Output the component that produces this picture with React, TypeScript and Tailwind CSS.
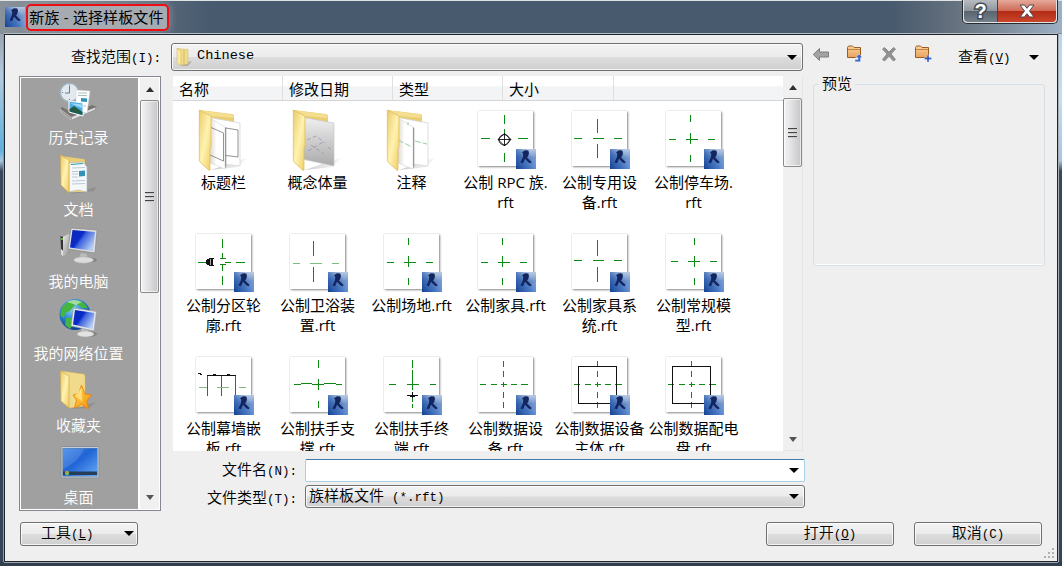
import React from "react";

const SONG = "font-['Liberation_Serif','Noto_Sans_CJK_SC',serif] text-[15px] font-[350] text-black";
const LATIN = "font-['Liberation_Mono',monospace] text-[12.5px] font-normal";
const YAHEI = "font-['Open_Sans','Noto_Sans_CJK_SC',sans-serif] text-[15px] text-black";
const G = "#0a8a12";

type Seg = [number, number, number];
type Thumb = { v: Seg[]; h: Seg[]; extra?: React.ReactNode; soft?: boolean };
type Item = { lines: string[]; thumb?: Thumb; folder?: "title" | "mass" | "note" };

const farH = (y: number): Seg[] => [[y, 2, 10], [y, 21, 32], [y, 42, 50]];
const cross = (x: number, y: number, dx = 0): Thumb => ({
  v: [[x, 4, 11], [x, 22, 33], [x, 44, 51]],
  h: [[y, 3 + dx, 10 + dx], [y, 20 + dx, 32 + dx], [y, 42 + dx, 49 + dx]],
});
const fine: Thumb = {
  v: [[25.5, 4, 10], [25.5, 14, 20], [25.5, 25, 30], [25.5, 35, 41], [25.5, 45, 51]],
  h: [[27.5, 2, 8], [27.5, 13, 19], [27.5, 23, 29], [27.5, 33, 39], [27.5, 43, 50]],
};
const boxed: Thumb = {
  ...fine,
  extra: <rect x="6.5" y="9.5" width="38" height="37" fill="none" stroke="#111" />,
};

const items: Item[] = [
  { lines: ["标题栏"], folder: "title" },
  { lines: ["概念体量"], folder: "mass" },
  { lines: ["注释"], folder: "note" },
  {
    lines: ["公制 RPC 族.", "rft"],
    thumb: {
      v: [[26.5, 4, 13], [26.5, 18, 24], [26.5, 42, 51]],
      h: [[27.5, 3, 12], [27.5, 40, 50]],
      extra: (
        <g fill="none" stroke="#111" shapeRendering="auto">
          <circle cx="26.2" cy="28.8" r="5.2" strokeWidth="0.9" />
          <path d="M20 28.5 26.5 22.5 33 28.5 26.5 35ZM20 28.5H33M26.5 22V35" strokeWidth="0.9" />
        </g>
      ),
    },
  },
  { lines: ["公制专用设", "备.rft"], thumb: { v: [[25.5, 8, 22], [25.5, 33, 47]], h: farH(27.5) } },
  { lines: ["公制停车场.", "rft"], thumb: cross(24.5, 28.5) },
  {
    lines: ["公制分区轮", "廓.rft"],
    thumb: {
      v: [[26.5, 5, 14], [26.5, 19, 24], [26.5, 31, 37], [26.5, 42, 51]],
      h: [[28.5, 2, 11], [28.5, 29, 35], [28.5, 40, 49], [24.5, 24, 30], [30.5, 24, 30]],
      extra: (
        <g fill="#111">
          <path d="M10 26h1v-1h2v-1h5v1h-1v6h1v1h-5v-1h-2v-1h-1z" />
          <path d="M14.5 25V31" stroke="#aaa" />
        </g>
      ),
    },
  },
  { lines: ["公制卫浴装", "置.rft"], thumb: { v: [[23.5, 7, 22], [23.5, 33, 48]], h: [[29.5, 3, 10], [29.5, 20, 32], [29.5, 42, 49]], soft: true } },
  { lines: ["公制场地.rft"], thumb: cross(24.5, 28.5) },
  { lines: ["公制家具.rft"], thumb: cross(24.5, 28.5) },
  { lines: ["公制家具系", "统.rft"], thumb: { v: [[25.5, 6, 22], [25.5, 33, 48]], h: farH(26.5) } },
  { lines: ["公制常规模", "型.rft"], thumb: cross(28.5, 27.5, 2) },
  {
    lines: ["公制幕墙嵌", "板.rft"],
    thumb: {
      v: [[11.5, 19, 39], [25.5, 19, 39], [39.5, 19, 39]],
      h: [[30.5, 3, 11], [30.5, 21, 33], [30.5, 43, 50]],
      soft: true,
      extra: <path d="M11 18.500H40M2 16.500H5M4 17.500H6M17 17.500H20M31 17.500H34" stroke="#111" />,
    },
  },
  {
    lines: ["公制扶手支", "撑.rft"],
    thumb: {
      v: [[28.5, 3, 11], [28.5, 22, 33], [28.5, 44, 51]],
      h: [],
      extra: <path d="M4 27.500H11M11 26.500H22M22 27.500H34M34 26.500H46M46 27.500H52" stroke={G} />,
    },
  },
  {
    lines: ["公制扶手终", "端.rft"],
    thumb: {
      v: [[28.5, 3, 11], [28.5, 13, 33], [28.5, 35, 45], [28.5, 47, 51]],
      h: [[27.5, 5, 12], [27.5, 23, 35], [27.5, 46, 52]],
      extra: <path d="M23 38.500H34M26 39.500H31M28.500 35V41" stroke="#111" />,
    },
  },
  { lines: ["公制数据设", "备.rft"], thumb: fine },
  { lines: ["公制数据设备", "主体.rft"], thumb: boxed },
  { lines: ["公制数据配电", "盘.rft"], thumb: boxed },
];

function RevitMark({ size }: { size: number }) {
  return (
    <svg width={size} height={size} viewBox="0 0 20 20" className="block">
      <rect width="20" height="20" fill="url(#rvbg)" />
      <rect width="20" height="20" fill="url(#rvlow)" />
      <path d="M6 3.200 9 1.200 12.300 1.500 13 4 12.200 7 11 8.400 15.600 13 14.800 14.200 12.500 13.600 9 9.800 7 14.200 4.500 13.600 7 8 7.200 4.800Z" fill="#14265f" />
    </svg>
  );
}

function Thumbnail({ thumb }: { thumb: Thumb }) {
  return (
    <div className="relative mt-[2px] ml-[20px] h-[55px] w-[55px] bg-white shadow-[0_0_1px_rgba(0,0,0,.25),1px_1px_2px_rgba(0,0,0,.45)]">
      <svg width="55" height="55" shapeRendering="crispEdges" className="block">
        <g stroke={thumb.soft ? "#7dbe80" : G}>
          {thumb.v.map(([x, a, b], i) => (
            <line key={"v" + i} x1={x} x2={x} y1={a} y2={b} stroke={G} />
          ))}
          {thumb.h.map(([y, a, b], i) => (
            <line key={"h" + i} y1={y} y2={y} x1={a} x2={b} strokeWidth={thumb.soft ? 1.01 : 1} />
          ))}
        </g>
        {thumb.extra}
      </svg>
      <div className="absolute top-[38px] left-[38px]">
        <RevitMark size={20} />
      </div>
    </div>
  );
}

function FileFolder({ kind }: { kind: "title" | "mass" | "note" }) {
  return (
    <svg width="60" height="63" viewBox="0 0 60 63" className="ml-[20px] block">
      <path d="M40 52 51 49 42 58 15 61Z" fill="url(#shade)" />
      <path d="M3.300 1 36 5Q38 5.500 38 7V45L14 50Z" fill="#e9cd70" />
      <path d="M4 1.300 36 5.500Q37.300 6 37.500 9L15 7Z" fill="#f4df90" />
      {kind === "mass" ? (
        <>
          <path d="M14 8.500 44 14V57L12 50Z" fill="url(#massg)" stroke="#c9c9c9" strokeWidth=".7" />
          <path d="M17 31 26 27 35 34M18 42 33 33M21 36 34 45M38 38 42 42" fill="none" stroke="#9b87a8" strokeWidth=".7" strokeDasharray="4 2.5" />
        </>
      ) : (
        <>
          <path d="M14 8.500 44 14V57L28 55Z" fill="#fff" stroke="#d0d0d0" strokeWidth=".7" />
          <path d="M14 9 29 18V60L12 53Z" fill="url(#pageg)" stroke="#ccc" strokeWidth=".5" />
          <path d="M29 18 30.300 19V57L29 59.500Z" fill="#999" />
          {kind === "title" ? (
            <path d="M14 18 27.500 24V52L14 46M30 19 42 21V48L30 46.500" fill="none" stroke="#777" strokeWidth=".8" />
          ) : (
            <path d="M14 31 28 38M31 32 43 35M24 13V16" fill="none" stroke="#8fc695" strokeWidth=".9" strokeDasharray="6 2" />
          )}
        </>
      )}
      <path d="M3.300 1 14 6.500Q15 7 15 8.500V37L14 39V61Q13 62 12 60.500L4 53Q3.300 52 3.300 50Z" fill="url(#foldf)" stroke="#ddb95b" strokeWidth=".7" />
    </svg>
  );
}

function Defs() {
  return (
    <svg width="0" height="0" className="absolute">
      <defs>
        <linearGradient id="rvbg" x1="0" y1="0" x2="0" y2="1">
          <stop offset="0" stopColor="#b9cbe4" />
          <stop offset=".45" stopColor="#7396cd" />
          <stop offset="1" stopColor="#86b0ec" />
        </linearGradient>
        <linearGradient id="rvlow" x1="0" y1="0.9" x2="0.8" y2="0.3">
          <stop offset="0" stopColor="#174596" />
          <stop offset=".5" stopColor="#2a5cae" stopOpacity=".7" />
          <stop offset="1" stopColor="#2a5cae" stopOpacity="0" />
        </linearGradient>
        <linearGradient id="foldf" x1="0" y1="0" x2="1" y2="1">
          <stop offset="0" stopColor="#e9cb6c" />
          <stop offset=".5" stopColor="#fff3b0" />
          <stop offset="1" stopColor="#f0cb60" />
        </linearGradient>
        <linearGradient id="massg" x1="0" y1="0" x2="0" y2="1">
          <stop offset="0" stopColor="#efefef" />
          <stop offset="1" stopColor="#aaa" />
        </linearGradient>
        <linearGradient id="pageg" x1="0" y1="0" x2="1" y2="0">
          <stop offset="0" stopColor="#d5cdbf" />
          <stop offset=".5" stopColor="#fff" />
          <stop offset="1" stopColor="#fff" />
        </linearGradient>
        <linearGradient id="shade" x1="0" y1="0" x2="1" y2="0">
          <stop offset="0" stopColor="#999" stopOpacity=".5" />
          <stop offset="1" stopColor="#ccc" stopOpacity=".2" />
        </linearGradient>
        <linearGradient id="screen" x1="0" y1="0" x2="1" y2="0.6">
          <stop offset="0" stopColor="#0926b8" />
          <stop offset=".45" stopColor="#0a2bc8" />
          <stop offset=".55" stopColor="#3d63dc" />
          <stop offset="1" stopColor="#b5ccf6" />
        </linearGradient>
        <linearGradient id="desk" x1="0" y1="0" x2="1" y2="1">
          <stop offset="0" stopColor="#3f88e6" />
          <stop offset=".45" stopColor="#2164d6" />
          <stop offset="1" stopColor="#66aaf6" />
        </linearGradient>
        <radialGradient id="globe" cx=".4" cy=".3" r=".7">
          <stop offset="0" stopColor="#8fd4f4" />
          <stop offset=".5" stopColor="#2f8bd6" />
          <stop offset="1" stopColor="#0b3f93" />
        </radialGradient>
        <linearGradient id="metal" x1="0" y1="0" x2="1" y2="1">
          <stop offset="0" stopColor="#f7f7f7" />
          <stop offset="1" stopColor="#8c8c8c" />
        </linearGradient>
        <linearGradient id="star" x1="0" y1="0" x2="1" y2="1">
          <stop offset="0" stopColor="#ffe14a" />
          <stop offset="1" stopColor="#f58a12" />
        </linearGradient>
        <linearGradient id="orange" x1="0" y1="0" x2="0" y2="1">
          <stop offset="0" stopColor="#fbd3a1" />
          <stop offset="1" stopColor="#e9a15a" />
        </linearGradient>
      </defs>
    </svg>
  );
}

const placeIcons: Record<string, React.ReactNode> = {
  history: (
    <>
      <path d="M1 27 12 36 38 25 33 23 14 31 3 25Z" fill="#77746f" />
      <path d="M1 27 12 35V38L2 30Z" fill="#999" stroke="#ddd" strokeWidth=".5" />
      <path d="M12 35 37 25 36 28 13 38Z" fill="#dedede" stroke="#777" strokeWidth=".5" />
      <circle cx="10.500" cy="10.500" r="9.200" fill="#e2eaf0" stroke="#9fb2bd" strokeWidth="1.500" />
      <path d="M10.500 4V11H6M10.500 2.500V3.500M17 10.500H18M3 10.500H4M10.500 17V18" stroke="#47606e" strokeWidth=".8" fill="none" />
      <path d="M17 8 31 9 28 31 17 28Z" fill="#fff" stroke="#ccc" strokeWidth=".5" />
      <path d="M19 11H28M19 13.500H28M19 24H27" stroke="#9aa" strokeWidth=".8" />
      <path d="M22 16 28 16.500V20L22 19.500Z" fill="#2993b8" />
      <path d="M10 19 24 21V34L10 30Z" fill="#4cade5" stroke="#fff" strokeWidth="1" />
      <path d="M10.500 27 15 24 23.500 30V33L10.500 29.500Z" fill="#245b46" />
      <path d="M11 21 23 22.500V26L15 23Z" fill="#9bdaf8" />
    </>
  ),
  documents: (
    <>
      <path d="M27 36 37 33 35 37 10 40Z" fill="#777" opacity=".45" />
      <path d="M2 2 24 5Q26 5 26 7V38L10 38Z" fill="#ebcf75" />
      <path d="M10 9 24 8 28 13V38L19 36 10 38Z" fill="#f5f8fa" stroke="#a9b2b9" strokeWidth=".6" />
      <path d="M12 10.500 24 9.500" stroke="#2f9aa5" strokeWidth="1" />
      <path d="M13 14 26 13.500M13 17.500H19M13 20H19M13 23H19M13 27 26 26.500M13 30 26 29.500" stroke="#a9bcc9" strokeWidth=".8" />
      <path d="M20 17 26 16.500V22L20 22.500Z" fill="#3191b9" />
      <path d="M1.500 1 10 6V39L2 31Z" fill="url(#foldf)" stroke="#d1aa4d" strokeWidth=".7" />
    </>
  ),
  computer: (
    <>
      <ellipse cx="26" cy="34" rx="12" ry="3" fill="#666" opacity=".5" />
      <path d="M3 11 11 7V27L4 31 2 29Z" fill="url(#metal)" stroke="#999" strokeWidth=".5" />
      <path d="M1.500 10 4 11V25L2 23Z" fill="#333" />
      <path d="M2 23 4 25V30L2 28Z" fill="#ddd" />
      <circle cx="3" cy="13" r="1" fill="#6de242" />
      <path d="M22 27 28 28V32H20Z" fill="#bbb" />
      <ellipse cx="24.500" cy="34" rx="10" ry="3.200" fill="#dcdcdc" stroke="#aaa" strokeWidth=".6" />
      <path d="M12 2 38 4 36 27 9 23Z" fill="#dedede" stroke="#888" strokeWidth=".7" />
      <path d="M13.500 4 36 6 34 25 11 21.500Z" fill="url(#screen)" />
    </>
  ),
  network: (
    <>
      <circle cx="16" cy="16.500" r="15.500" fill="url(#globe)" />
      <path d="M7 5 13 3 16 7 11 13 6 15 5 20 1.500 18Q1 10 7 5ZM18 2 25 5 29 10 23 10 19 7ZM7 20 13 20 15 25 11 31 6 27Z" fill="#45b53f" />
      <path d="M8 4Q15 0 23 4L17 7Z" fill="#c6f19e" opacity=".7" />
      <ellipse cx="29" cy="36" rx="9" ry="3" fill="#666" opacity=".5" />
      <path d="M23 28 29 29V34H22Z" fill="#bbb" />
      <ellipse cx="26.500" cy="36" rx="8.500" ry="3" fill="#e2e2e2" stroke="#aaa" strokeWidth=".5" />
      <path d="M14.500 10 37.500 13.500 35 33 12 28Z" fill="#e5e7ed" stroke="#999" strokeWidth=".6" />
      <path d="M16 12 35.500 15 33.500 31 14 26.500Z" fill="url(#screen)" />
    </>
  ),
  favorites: (
    <>
      <path d="M22 36 37 32 30 38 10 39Z" fill="#777" opacity=".4" />
      <path d="M2 1 24 4Q26 4 26 6V36L10 38Z" fill="#f0da8c" stroke="#d7b860" strokeWidth=".5" />
      <path d="M1.500 1 10 6V38L2 31Z" fill="url(#foldf)" stroke="#d1aa4d" strokeWidth=".7" />
      <path d="M22.500 15 26 24 32.500 25 28 30.500 29.500 39 22.500 34.500 15.500 38 17.500 30 14 25 19.500 23.500Z" fill="url(#star)" stroke="#e67e0d" strokeWidth=".8" />
      <path d="M22.500 17.500 23.500 32 16 25.500Z" fill="#fff3a0" opacity=".6" />
    </>
  ),
  desktop: (
    <>
      <rect x="2" y="4.500" width="38" height="31.500" rx="1" fill="#c5ccd3" stroke="#87919b" strokeWidth="1" />
      <rect x="3.500" y="6" width="35" height="28.500" fill="#5e7f9e" />
      <rect x="4" y="6.500" width="34" height="27.500" fill="url(#desk)" />
      <path d="M4 6.500H25Q21 19 4 27Z" fill="#fff" opacity=".12" />
      <rect x="4" y="29.500" width="34" height="3.500" fill="#263e58" />
      <circle cx="8" cy="31" r="2.200" fill="#6fc35f" />
      <path d="M8 31V28.800A2.200 2.200 0 0 0 5.800 31Z" fill="#e7793c" />
    </>
  ),
};

const places = [
  { icon: "history", label: "历史记录" },
  { icon: "documents", label: "文档" },
  { icon: "computer", label: "我的电脑" },
  { icon: "network", label: "我的网络位置" },
  { icon: "favorites", label: "收藏夹" },
  { icon: "desktop", label: "桌面" },
];

function Caret({ className = "" }: { className?: string }) {
  return (
    <svg width="10" height="5" viewBox="0 0 10 5" className={"block shrink-0 " + className}>
      <path d="M0 0H10L5 5Z" fill="#000" />
    </svg>
  );
}

function ScrollArrow({ up }: { up?: boolean }) {
  return (
    <svg width="8" height="5" viewBox="0 0 8 5" className="block">
      <path d={up ? "M0 5H8L4 0Z" : "M0 0H8L4 5Z"} fill={up ? "#303030" : "#555"} />
    </svg>
  );
}

function Grip() {
  return (
    <div className="flex flex-col gap-[2px]">
      <div className="h-[2px] w-[9px] border-t border-[#444] bg-[#c9c9c9]" />
      <div className="h-[2px] w-[9px] border-t border-[#444] bg-[#c9c9c9]" />
      <div className="h-[2px] w-[9px] border-t border-[#444] bg-[#c9c9c9]" />
    </div>
  );
}

const thumbStyle =
  "flex items-center justify-center rounded-[2px] border border-[#8a8a8a] bg-linear-to-r from-[#f4f4f4] via-[#dcdcde] via-55% to-[#c6c6ca] shadow-[inset_0_0_0_1px_rgba(255,255,255,.6)]";
const btn =
  "rounded-[3px] border border-[#707070] bg-[linear-gradient(#f3f3f3,#ebebeb_49%,#dddddd_51%,#cfcfcf)] shadow-[inset_0_0_0_1px_rgba(255,255,255,.75)]";

function Toolbar() {
  const folder = (
    <>
      <path d="M1.500 2.500 2.500 1H6.500L8 2.500H14.500V12.500H1.500Z" fill="url(#orange)" stroke="#9b5d22" />
      <path d="M2 4.500H14" stroke="#c9823c" />
    </>
  );
  return (
    <div className="ml-[9px] flex h-[22px] gap-[14px]">
      <svg width="20" height="20" viewBox="0 0 20 20">
        <path d="M1.300 9.500 7.500 3.500V7H16.500V12H7.500V15.500Z" fill="#a3a3a3" stroke="#7d7d7d" />
      </svg>
      <svg width="20" height="20" viewBox="0 0 20 20">
        {folder}
        <path d="M9 14.500H12V12.500H9.800L13 9 16.500 12.500H14.500V16.800H9Z" fill="#3363d6" stroke="#eee" strokeWidth=".5" />
      </svg>
      <svg width="20" height="20" viewBox="0 0 20 20">
        <path d="M2.500 4 4.500 2.500 9 7 13.500 2.500 15.500 4 11 9 15.500 14.500 13.500 16 9 11.300 4.500 16 2.500 14.500 7 9Z" fill="#929292" stroke="#7d7d7d" strokeWidth=".8" />
      </svg>
      <svg width="20" height="20" viewBox="0 0 20 20">
        {folder}
        <path d="M13 10H15V12.500H17.500V14.500H15V17H13V14.500H10.500V12.500H13Z" fill="#2c55c8" stroke="#eee" strokeWidth=".4" />
      </svg>
    </div>
  );
}

function TitleBar() {
  return (
    <div className="flex h-[33px] items-start border-t border-[#dfe3e6] bg-linear-to-r from-[#8a9299] from-0% via-[#475a6e] via-20% to-[#475a6e] to-100%">
      <div className="flex h-[32px] w-full items-start justify-between bg-linear-to-r from-transparent from-84% via-[#66727e] via-90% to-[#9db0c4]">
        <div className="flex">
          <div className="mt-[6px] ml-[5px]">
            <RevitMark size={20} />
          </div>
          <div className="mt-[3px] ml-[1px] flex h-[27px] w-[143px] items-center justify-center rounded-[5px] border-2 border-[#f00d12] bg-[#a5abb1] pr-[2px] pb-[2px] shadow-[0_0_7px_2px_rgba(165,171,177,.45)]">
            <span className={YAHEI + " leading-[20px] tracking-[.15px] whitespace-nowrap"}>新族 - 选择样板文件</span>
          </div>
        </div>
        <div className="mr-[4px] flex h-[24px] -translate-y-px rounded-b-[5px] border border-t-0 border-[#272c33] bg-[#e0e3e6] px-px pb-px">
          <div className="flex w-[34px] items-center justify-center rounded-bl-[4px] border-r border-[#444] bg-[linear-gradient(#b6bbc0,#8e969e_48%,#59636d_50%,#74808b)]">
            <span className="font-['Liberation_Sans',sans-serif] text-[20px] font-bold text-white [-webkit-text-stroke:3px_#444b55] [paint-order:stroke_fill]">?</span>
          </div>
          <div className="flex w-[58px] items-center justify-center rounded-br-[4px] bg-[linear-gradient(#e4a99b,#cf6b56_48%,#b32a14_50%,#c8452b)]">
            <svg width="16" height="14" viewBox="0 0 16 14">
              <path d="M1 1H5.500L8 4.300 10.500 1H15L10.500 7 15 13H10.500L8 9.700 5.500 13H1L5.500 7Z" fill="#fff" stroke="#4a4550" />
            </svg>
          </div>
        </div>
      </div>
    </div>
  );
}

export default function App() {
  return (
    <div className="flex h-[566px] w-[1062px] flex-col overflow-hidden bg-linear-to-b from-[#8a9299] via-[#3a485c] via-60% to-[#323d4e]">
      <Defs />
      <TitleBar />
      <div className="mx-[4px] h-px shrink-0 bg-[#b4bcc4]" />
      <div className="flex h-[528px] shrink-0">
        <div className="h-full w-[4px] shrink-0 border-r border-[#8f9aa5] bg-[linear-gradient(#9aa4ae,#b4cbe0_8%,#5fb0dc_22%,#a9c8e0_24%,#3a485c_26%,#35445a)]" />
        <div className="flex w-[1054px] shrink-0 flex-col border border-[#1e242c] bg-[#efefef]">
          <div className="flex h-[41px] shrink-0 items-start">
            <div className={SONG + " mt-[11px] w-[166px] pr-[10px] text-right leading-[22px]"}>
              查找范围<span className={LATIN}>(I):</span>
            </div>
            <div className={btn + " mt-[8px] flex h-[28px] w-[632px] items-center pr-[5px] pl-[3px]"}>
              <svg width="18" height="20" viewBox="0 0 18 20" className="block">
                <path d="M11 16 17 14 13 19 6 19Z" fill="#888" opacity=".5" />
                <path d="M2 1.500 13 2.500V17L6 18Z" fill="#f1dc8c" stroke="#d1b15d" strokeWidth=".5" />
                <path d="M2 1.500 6 4V18.500L2 16Z" fill="#fae99c" stroke="#d1b15d" strokeWidth=".5" />
                <path d="M9 3V17.500" stroke="#d6bb66" />
              </svg>
              <span className="mb-[3px] ml-[4px] font-['Liberation_Mono',monospace] text-[13.6px] leading-[20px] text-black">Chinese</span>
              <Caret className="ml-auto" />
            </div>
            <div className="pt-[10px]">
              <Toolbar />
            </div>
            <div className={SONG + " mt-[11px] ml-[24px] w-[54px] leading-[22px]"}>
              查看<span className={LATIN}>(<u>V</u>)</span>
            </div>
            <Caret className="mt-[20px] ml-[17px]" />
          </div>

          <div className="flex h-[435px] shrink-0">
            <div className="ml-[14px] flex w-[142px] shrink-0 border border-[#828790] bg-white p-px">
              <div className="flex w-[117px] flex-col overflow-hidden bg-[#a0a0a0]">
                {places.map((p) => (
                  <div key={p.label} className="flex h-[72px] shrink-0 flex-col items-center pt-[4px] pr-[2px]">
                    <svg width="40" height="40" viewBox="0 0 40 40" className="block overflow-visible">
                      {placeIcons[p.icon]}
                    </svg>
                    <div className="mt-[5px] font-['Noto_Sans_CJK_SC',sans-serif] text-[15px] leading-[20px] font-[350] text-white">{p.label}</div>
                  </div>
                ))}
              </div>
              <div className="ml-[2px] flex w-[19px] flex-col items-center bg-[#f0f0f0]">
                <div className="flex h-[22px] shrink-0 items-center justify-center">
                  <ScrollArrow up />
                </div>
                <div className={thumbStyle + " h-[193px] w-[19px] shrink-0"}>
                  <Grip />
                </div>
                <div className="mt-auto mb-[9px]">
                  <ScrollArrow />
                </div>
              </div>
            </div>

            <div className="ml-[12px] flex w-[632px] shrink-0 flex-col">
              <div className="flex h-[375px] w-[630px] shrink-0">
                <div className="flex w-[610px] flex-col overflow-hidden bg-white">
                  <div className={YAHEI + " flex h-[25px] shrink-0 border-b border-[#d5d5d5] bg-linear-to-b from-white from-40% to-[#f3f4f6] to-45% leading-[26px]"}>
                    <div className="w-[110px] border-r border-[#dfdfe0] pl-[6px]">名称</div>
                    <div className="w-[110px] border-r border-[#dfdfe0] pl-[6px]">修改日期</div>
                    <div className="w-[110px] border-r border-[#dfdfe0] pl-[6px]">类型</div>
                    <div className="w-[111px] border-r border-[#dfdfe0] pl-[6px]">大小</div>
                  </div>
                  <div className="ml-[3px] grid auto-rows-[123px] grid-cols-[repeat(6,94px)] pt-[8px]">
                    {items.map((it) => (
                      <div key={it.lines.join("")} className="flex flex-col">
                        <div className="h-[63px] shrink-0">
                          {it.thumb ? <Thumbnail thumb={it.thumb} /> : <FileFolder kind={it.folder!} />}
                        </div>
                        <div className={YAHEI + " text-center leading-[20px] whitespace-nowrap"}>
                          {it.lines.map((l) => (
                            <div key={l} className="-mr-[9px] -ml-2">{l}</div>
                          ))}
                        </div>
                      </div>
                    ))}
                  </div>
                </div>
                <div className="flex w-[20px] flex-col items-center border-r border-b border-[#e6e6e6] bg-[#f0f0f0]">
                  <div className="flex h-[22px] shrink-0 items-center justify-center">
                    <ScrollArrow up />
                  </div>
                  <div className={thumbStyle + " h-[69px] w-[19px] shrink-0"}>
                    <Grip />
                  </div>
                  <div className="mt-auto mb-[8px]">
                    <ScrollArrow />
                  </div>
                </div>
              </div>
              <div className={SONG + " mt-[8px] flex h-[23px] items-center"}>
                <div className="w-[132px] pr-[8px] text-right">
                  文件名<span className={LATIN}>(N):</span>
                </div>
                <div className="flex h-[23px] w-[500px] items-center rounded-[2px] border border-[#a9cfe8] border-t-[#3d7bad] bg-white pr-[5px]">
                  <Caret className="ml-auto" />
                </div>
              </div>
              <div className={SONG + " mt-[3px] flex h-[23px] items-center"}>
                <div className="w-[132px] pt-[3px] pr-[8px] text-right">
                  文件类型<span className={LATIN}>(T):</span>
                </div>
                <div className={btn + " flex h-[23px] w-[500px] items-center pr-[5px] pl-[3px]"}>
                  <span className="leading-[20px]">
                    族样板文件<span className={LATIN + " ml-[8px]"}>(*.rft)</span>
                  </span>
                  <Caret className="ml-auto" />
                </div>
              </div>
            </div>

            <fieldset className={SONG + " ml-[8px] h-[190px] w-[232px] rounded-[3px] border border-[#d5dfe5] px-0 shadow-[inset_0_-1px_0_#fff]"}>
              <legend className="ml-[5px] px-[3px] leading-[16px]">预览</legend>
            </fieldset>
          </div>

          <div className={SONG + " flex h-[50px] shrink-0 items-start pt-[11px]"}>
            <div className={btn + " ml-[15px] flex h-[24px] w-[118px] items-center pr-[3px] pb-px pl-[20px]"}>
              <span>工具<span className={LATIN}>(<u>L</u>)</span></span>
              <Caret className="ml-auto" />
            </div>
            <div className={btn + " ml-auto flex h-[24px] w-[128px] items-center justify-center pb-px"}>
              <span>打开<span className={LATIN}>(<u>O</u>)</span></span>
            </div>
            <div className={btn + " ml-[20px] flex h-[24px] w-[128px] items-center justify-center pb-px"}>
              <span>取消<span className={LATIN}>(C)</span></span>
            </div>
            <svg width="12" height="12" viewBox="0 0 12 12" className="mt-[25px] mr-[2px] ml-[1px] block">
              <path d="M9 1h2v2H9zM5 5h2v2H5zM9 5h2v2H9zM1 9h2v2H1zM5 9h2v2H5zM9 9h2v2H9z" fill="#b0b0b0" />
            </svg>
          </div>
        </div>
        <div className="h-full w-[4px] shrink-0 border-l border-[#a6afb8] bg-[linear-gradient(#b9d4ee,#c4def5_12%,#a5c5e2_24%,#3a485c_26%,#35445a)]" />
      </div>
      <div className="mx-[4px] h-px shrink-0 bg-[#9aa5b1]" />
    </div>
  );
}
